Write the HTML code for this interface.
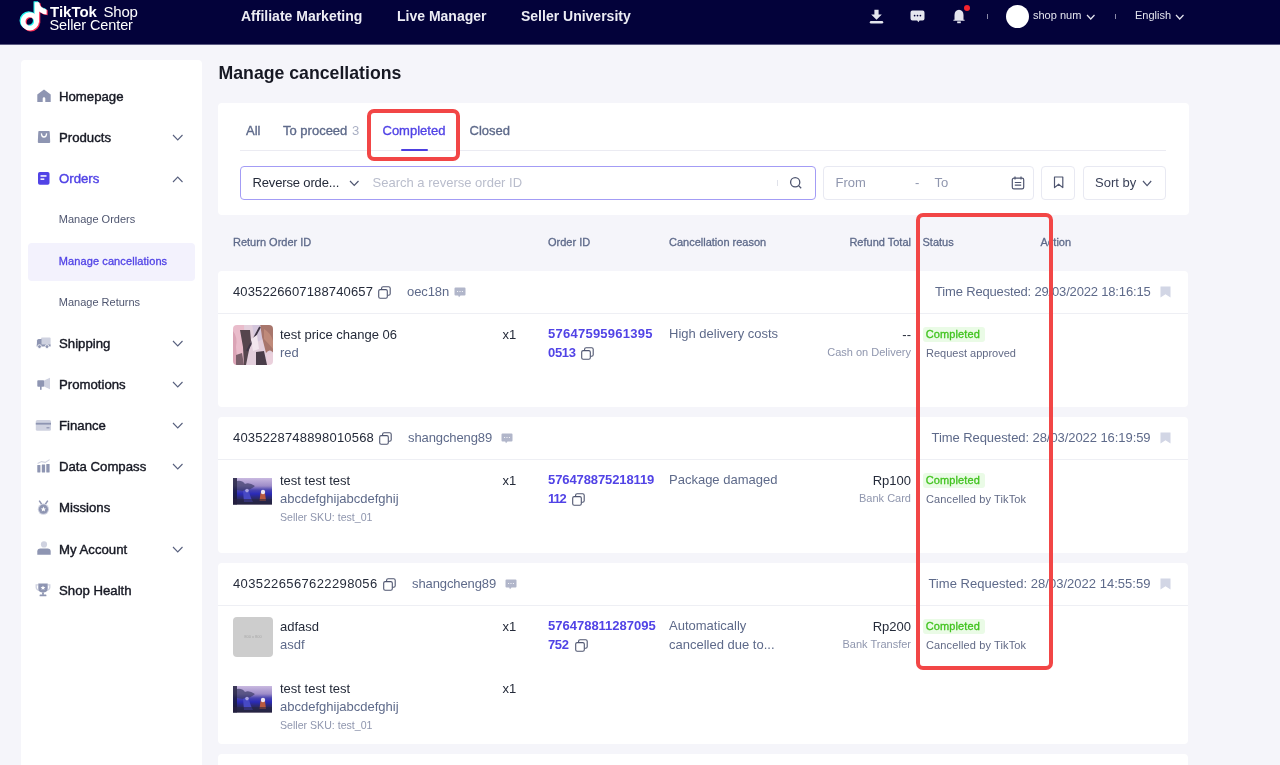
<!DOCTYPE html>
<html><head><meta charset="utf-8">
<style>
*{box-sizing:border-box;margin:0;padding:0}
html,body{width:1280px;height:765px;overflow:hidden}
body{background:#f5f5fa;font-family:"Liberation Sans",sans-serif;color:#252b3a;position:relative}
#root{position:absolute;left:0;top:0;width:1280px;height:765px;will-change:transform}
.a{position:absolute;white-space:nowrap}
.bx{position:absolute;background:#fff;border-radius:4px}
</style></head><body><div id="root">
<div class="a" style="left:0;top:0;width:1280px;height:44px;background:#03023a"></div>
<div class="a" style="left:0;top:44px;width:1280px;height:1px;background:#5c5b82"></div>
<svg class="a" style="left:18px;top:0px" width="32" height="34" viewBox="0 0 32 34"><g transform="translate(-1.1,-0.9)"><rect x="16.6" y="2.4" width="4.6" height="20" fill="#25f4ee"/><circle cx="11.8" cy="21.4" r="6.7" fill="none" stroke="#25f4ee" stroke-width="4.9"/><path d="M16.8 2.4H21.2Q21.8 8.2 28.6 9.4V14.4Q24.2 14.2 21 11.6Z" fill="#25f4ee"/></g><g transform="translate(1.1,0.9)"><rect x="16.6" y="2.4" width="4.6" height="20" fill="#fe2c55"/><circle cx="11.8" cy="21.4" r="6.7" fill="none" stroke="#fe2c55" stroke-width="4.9"/><path d="M16.8 2.4H21.2Q21.8 8.2 28.6 9.4V14.4Q24.2 14.2 21 11.6Z" fill="#fe2c55"/></g><g transform="translate(0,0)"><rect x="16.6" y="2.4" width="4.6" height="20" fill="#fff"/><circle cx="11.8" cy="21.4" r="6.7" fill="none" stroke="#fff" stroke-width="4.9"/><path d="M16.8 2.4H21.2Q21.8 8.2 28.6 9.4V14.4Q24.2 14.2 21 11.6Z" fill="#fff"/></g></svg>
<div class="a" style="left:50px;top:3.70px;font-size:15px;line-height:15px;color:#fff;font-weight:normal;letter-spacing:0px"><b>TikTok</b></div>
<div class="a" style="left:103.5px;top:3.70px;font-size:15px;line-height:15px;color:#fff;font-weight:normal;letter-spacing:-0.2px">Shop</div>
<div class="a" style="left:49.5px;top:18.23px;font-size:14.5px;line-height:14.5px;color:#fff;font-weight:normal;letter-spacing:-0.1px">Seller Center</div>
<div class="a" style="left:241px;top:9.15px;font-size:14px;line-height:14px;color:#ececf4;font-weight:bold;">Affiliate Marketing</div>
<div class="a" style="left:397px;top:9.15px;font-size:14px;line-height:14px;color:#ececf4;font-weight:bold;">Live Manager</div>
<div class="a" style="left:521px;top:9.15px;font-size:14px;line-height:14px;color:#ececf4;font-weight:bold;">Seller University</div>
<svg class="a" style="left:869px;top:9px" width="15" height="15" viewBox="0 0 15 15"><path d="M5.4 0.8H9.6V5.6H12.8L7.5 10.8L2.2 5.6H5.4Z" fill="#e4e5ee"/><rect x="0.8" y="12" width="13.4" height="2.4" rx="1.2" fill="#e4e5ee"/></svg>
<svg class="a" style="left:910px;top:10px" width="15" height="14" viewBox="0 0 15 14"><path d="M2.4 0.5H12.6Q14.5 0.5 14.5 2.4V8.6Q14.5 10.5 12.6 10.5H9.6L8.3 12.3L7.2 10.5H2.4Q0.5 10.5 0.5 8.6V2.4Q0.5 0.5 2.4 0.5Z" fill="#e4e5ee"/><circle cx="4.6" cy="5.6" r="0.85" fill="#03023a"/><circle cx="7.5" cy="5.6" r="0.85" fill="#03023a"/><circle cx="10.4" cy="5.6" r="0.85" fill="#03023a"/></svg>
<svg class="a" style="left:952px;top:9px" width="14" height="15" viewBox="0 0 14 15"><path d="M7 0.7Q11.3 1 11.5 6V10.8H12.6V11.8H1.4V10.8H2.5V6Q2.7 1 7 0.7Z" fill="#e4e5ee"/><rect x="5.2" y="12.4" width="3.6" height="1.8" fill="#e4e5ee"/></svg>
<div class="a" style="left:964px;top:5px;width:6px;height:6px;border-radius:50%;background:#f5222d"></div>
<div class="a" style="left:987px;top:14px;width:1px;height:5px;background:#8a8aa8"></div>
<div class="a" style="left:1006px;top:5px;width:23px;height:23px;border-radius:50%;background:#fff"></div>
<div class="a" style="left:1033px;top:10.19px;font-size:11px;line-height:11px;color:#e4e5ee;font-weight:normal;">shop num</div>
<svg class="a" style="left:1086px;top:14px" width="9.5" height="6" viewBox="0 0 9.5 6"><path d="M1 1L4.75 5L8.5 1" fill="none" stroke="#e4e5ee" stroke-width="1.2"/></svg>
<div class="a" style="left:1115px;top:14px;width:1px;height:5px;background:#8a8aa8"></div>
<div class="a" style="left:1135px;top:9.89px;font-size:11px;line-height:11px;color:#e4e5ee;font-weight:normal;">English</div>
<svg class="a" style="left:1175px;top:14px" width="9.5" height="6" viewBox="0 0 9.5 6"><path d="M1 1L4.75 5L8.5 1" fill="none" stroke="#e4e5ee" stroke-width="1.2"/></svg>
<div class="bx" style="left:21px;top:60px;width:181px;height:720px"></div>
<div class="a" style="left:28px;top:243px;width:167px;height:38px;background:#f3f2fd;border-radius:4px"></div>
<svg class="a" style="left:37px;top:89px" width="14" height="14" viewBox="0 0 14 14"><path d="M0.3 5.4L7 0.6L13.7 5.4V13H8.3V9.6A1.3 1.3 0 0 0 5.7 9.6V13H0.3Z" fill="#8e95b2"/></svg>
<div class="a" style="left:59px;top:90.13px;font-size:13.2px;line-height:13.2px;color:#161823;font-weight:normal;-webkit-text-stroke:0.4px #161823;">Homepage</div>
<svg class="a" style="left:37px;top:130px" width="14" height="14" viewBox="0 0 14 14"><path d="M2.2 1H11.8Q12.6 1 12.7 1.8L13.2 12Q13.2 13 12.2 13H1.8Q0.8 13 0.8 12L1.3 1.8Q1.4 1 2.2 1Z" fill="#8e95b2"/><path d="M4.4 3.4Q4.6 7 7 7Q9.4 7 9.6 3.4" fill="none" stroke="#fff" stroke-width="1.3"/></svg>
<div class="a" style="left:59px;top:131.13px;font-size:13.2px;line-height:13.2px;color:#161823;font-weight:normal;-webkit-text-stroke:0.4px #161823;">Products</div>
<svg class="a" style="left:171.8px;top:133.5px" width="11.5" height="7" viewBox="0 0 11.5 7"><path d="M1 1L5.75 6L10.5 1" fill="none" stroke="#58607e" stroke-width="1.1"/></svg>
<svg class="a" style="left:37px;top:171px" width="14" height="14" viewBox="0 0 14 14"><rect x="1" y="1" width="11.5" height="12.8" rx="1.8" fill="#5143e6"/><rect x="3.5" y="4.2" width="6" height="1.5" fill="#fff"/><rect x="3.5" y="7.4" width="3.8" height="1.5" fill="#fff"/></svg>
<div class="a" style="left:59px;top:172.13px;font-size:13.2px;line-height:13.2px;color:#5143e6;font-weight:normal;-webkit-text-stroke:0.4px #5143e6;">Orders</div>
<svg class="a" style="left:171.8px;top:175.8px" width="11.5" height="7" viewBox="0 0 11.5 7"><path d="M1 6L5.75 1L10.5 6" fill="none" stroke="#58607e" stroke-width="1.1"/></svg>
<svg class="a" style="left:36px;top:337px" width="15" height="12" viewBox="0 0 15 12"><rect x="5" y="0.5" width="9.6" height="8" rx="1" fill="#cfd2e0"/><path d="M1 3.5Q1.2 2 2.6 2H5.5V9.5H0.8Z" fill="#8e95b2"/><rect x="0.8" y="7.5" width="13.8" height="2" fill="#8e95b2"/><circle cx="3.5" cy="9.6" r="1.9" fill="#8e95b2" stroke="#fff" stroke-width="0.8"/><circle cx="11" cy="9.6" r="1.9" fill="#8e95b2" stroke="#fff" stroke-width="0.8"/></svg>
<div class="a" style="left:59px;top:337.13px;font-size:13.2px;line-height:13.2px;color:#161823;font-weight:normal;-webkit-text-stroke:0.4px #161823;">Shipping</div>
<svg class="a" style="left:171.8px;top:339.5px" width="11.5" height="7" viewBox="0 0 11.5 7"><path d="M1 1L5.75 6L10.5 1" fill="none" stroke="#58607e" stroke-width="1.1"/></svg>
<svg class="a" style="left:37px;top:377px" width="14" height="14" viewBox="0 0 14 14"><path d="M7 3.5L13 0.8V12.2L7 9.5Z" fill="#cfd2e0"/><rect x="0.3" y="3.2" width="6.8" height="6.5" rx="0.8" fill="#8e95b2"/><rect x="3" y="9" width="1.6" height="3.8" fill="#8e95b2"/></svg>
<div class="a" style="left:59px;top:378.13px;font-size:13.2px;line-height:13.2px;color:#161823;font-weight:normal;-webkit-text-stroke:0.4px #161823;">Promotions</div>
<svg class="a" style="left:171.8px;top:380.5px" width="11.5" height="7" viewBox="0 0 11.5 7"><path d="M1 1L5.75 6L10.5 1" fill="none" stroke="#58607e" stroke-width="1.1"/></svg>
<svg class="a" style="left:35px;top:419px" width="17" height="13" viewBox="0 0 17 13"><rect x="0.8" y="1" width="15.2" height="10.8" rx="1.5" fill="#cfd2e0"/><rect x="0.8" y="3.8" width="15.2" height="1.8" fill="#8e95b2"/><rect x="11.5" y="8.2" width="3" height="1.2" fill="#8e95b2"/></svg>
<div class="a" style="left:59px;top:419.13px;font-size:13.2px;line-height:13.2px;color:#161823;font-weight:normal;-webkit-text-stroke:0.4px #161823;">Finance</div>
<svg class="a" style="left:171.8px;top:421.5px" width="11.5" height="7" viewBox="0 0 11.5 7"><path d="M1 1L5.75 6L10.5 1" fill="none" stroke="#58607e" stroke-width="1.1"/></svg>
<svg class="a" style="left:37px;top:459px" width="14" height="14" viewBox="0 0 14 14"><path d="M0.6 4.6L4.5 2.6L8.2 3.4L12.6 0.6" fill="none" stroke="#cfd2e0" stroke-width="1.1"/><rect x="0.3" y="6" width="3.1" height="7.4" rx="0.3" fill="#8e95b2"/><rect x="4.8" y="5.6" width="3.3" height="7.8" rx="0.3" fill="#8e95b2"/><rect x="9.3" y="5" width="3.3" height="8.4" rx="0.3" fill="#8e95b2"/></svg>
<div class="a" style="left:59px;top:460.13px;font-size:13.2px;line-height:13.2px;color:#161823;font-weight:normal;-webkit-text-stroke:0.4px #161823;">Data Compass</div>
<svg class="a" style="left:171.8px;top:462.5px" width="11.5" height="7" viewBox="0 0 11.5 7"><path d="M1 1L5.75 6L10.5 1" fill="none" stroke="#58607e" stroke-width="1.1"/></svg>
<svg class="a" style="left:37px;top:500px" width="13" height="15" viewBox="0 0 13 15"><path d="M2.2 0.6L4.6 4.2M10.8 0.6L8.4 4.2" stroke="#8e95b2" stroke-width="1.5"/><circle cx="6.4" cy="9.2" r="5.6" fill="#cfd2e0"/><circle cx="6.4" cy="9.2" r="4.6" fill="#8e95b2"/><path d="M6.4 6.6L7.2 8.4L9 8.5L7.6 9.7L8.1 11.5L6.4 10.5L4.7 11.5L5.2 9.7L3.8 8.5L5.6 8.4Z" fill="#fff"/></svg>
<div class="a" style="left:59px;top:501.13px;font-size:13.2px;line-height:13.2px;color:#161823;font-weight:normal;-webkit-text-stroke:0.4px #161823;">Missions</div>
<svg class="a" style="left:37px;top:541px" width="14" height="14" viewBox="0 0 14 14"><circle cx="7" cy="3.4" r="3.1" fill="#cfd2e0"/><path d="M0.3 13.8V10.6Q0.3 7.6 3.4 7.6H10.6Q13.7 7.6 13.7 10.6V13.8Z" fill="#8e95b2"/></svg>
<div class="a" style="left:59px;top:543.13px;font-size:13.2px;line-height:13.2px;color:#161823;font-weight:normal;-webkit-text-stroke:0.4px #161823;">My Account</div>
<svg class="a" style="left:171.8px;top:545.5px" width="11.5" height="7" viewBox="0 0 11.5 7"><path d="M1 1L5.75 6L10.5 1" fill="none" stroke="#58607e" stroke-width="1.1"/></svg>
<svg class="a" style="left:35px;top:583px" width="16" height="14" viewBox="0 0 16 14"><path d="M3.3 1.8H1.2V4.5Q1.5 7 4 7.3M12.7 1.8H14.8V4.5Q14.5 7 12 7.3" fill="none" stroke="#cfd2e0" stroke-width="1.3"/><path d="M3.3 0.6H12.7V5.3Q12.7 9.6 8 9.6Q3.3 9.6 3.3 5.3Z" fill="#8e95b2"/><rect x="7.1" y="9.4" width="1.8" height="2.4" fill="#8e95b2"/><rect x="4.6" y="11.5" width="6.8" height="1.8" rx="0.4" fill="#8e95b2"/><path d="M8 2.4L8.7 4L10.4 4.1L9.1 5.2L9.5 6.8L8 5.9L6.5 6.8L6.9 5.2L5.6 4.1L7.3 4Z" fill="#fff"/></svg>
<div class="a" style="left:59px;top:584.13px;font-size:13.2px;line-height:13.2px;color:#161823;font-weight:normal;-webkit-text-stroke:0.4px #161823;">Shop Health</div>
<div class="a" style="left:58.8px;top:214.49px;font-size:11px;line-height:11px;color:#4f5670;font-weight:normal;">Manage Orders</div>
<div class="a" style="left:58.8px;top:256.49px;font-size:11px;line-height:11px;color:#5143e6;font-weight:normal;-webkit-text-stroke:0.3px #5143e6;letter-spacing:0.1px">Manage cancellations</div>
<div class="a" style="left:58.8px;top:297.49px;font-size:11px;line-height:11px;color:#4f5670;font-weight:normal;">Manage Returns</div>
<div class="a" style="left:218.5px;top:65.22px;font-size:17.7px;line-height:17.7px;color:#161823;font-weight:bold;">Manage cancellations</div>
<div class="bx" style="left:218px;top:103px;width:971px;height:112px"></div>
<div class="a" style="left:240px;top:150px;width:926px;height:1px;background:#ebebf2"></div>
<div class="a" style="left:246px;top:123.80px;font-size:13px;line-height:13px;color:#5e6a8a;font-weight:normal;-webkit-text-stroke:0.35px #5e6a8a;">All</div>
<div class="a" style="left:283px;top:123.80px;font-size:13px;line-height:13px;color:#5e6a8a;font-weight:normal;-webkit-text-stroke:0.35px #5e6a8a;">To proceed</div>
<div class="a" style="left:352px;top:123.80px;font-size:13px;line-height:13px;color:#aab0c4;font-weight:normal;">3</div>
<div class="a" style="left:382.5px;top:123.80px;font-size:13px;line-height:13px;color:#5143e6;font-weight:normal;-webkit-text-stroke:0.35px #5143e6;">Completed</div>
<div class="a" style="left:401px;top:149px;width:27px;height:2px;background:#4d3fe0;border-radius:1px"></div>
<div class="a" style="left:469.5px;top:123.80px;font-size:13px;line-height:13px;color:#5e6a8a;font-weight:normal;-webkit-text-stroke:0.35px #5e6a8a;">Closed</div>
<div class="a" style="left:240px;top:166px;width:576px;height:34px;border:1px solid #a39cf5;border-radius:4px;background:#fff"></div>
<div class="a" style="left:252.5px;top:176.10px;font-size:13px;line-height:13px;color:#252b3a;font-weight:normal;letter-spacing:-0.15px">Reverse orde...</div>
<svg class="a" style="left:348.5px;top:180px" width="10.5" height="6.5" viewBox="0 0 10.5 6.5"><path d="M1 1L5.25 5.5L9.5 1" fill="none" stroke="#4f5670" stroke-width="1.2"/></svg>
<div class="a" style="left:372.5px;top:176.10px;font-size:13px;line-height:13px;color:#b9bdcc;font-weight:normal;">Search a reverse order ID</div>
<div class="a" style="left:777px;top:180px;width:1px;height:6px;background:#e0e2ea"></div>
<svg class="a" style="left:789px;top:176px" width="14" height="14" viewBox="0 0 14 14"><circle cx="6.2" cy="6.2" r="4.6" fill="none" stroke="#4f5670" stroke-width="1.3"/><path d="M9.6 9.6L12.2 12.2" stroke="#4f5670" stroke-width="1.3"/></svg>
<div class="a" style="left:823px;top:166px;width:211px;height:34px;border:1px solid #e8e9f2;border-radius:4px;background:#fff"></div>
<div class="a" style="left:835.6px;top:176.10px;font-size:13px;line-height:13px;color:#8f96ae;font-weight:normal;">From</div>
<div class="a" style="left:915px;top:176.10px;font-size:13px;line-height:13px;color:#8f96ae;font-weight:normal;">-</div>
<div class="a" style="left:934.5px;top:176.10px;font-size:13px;line-height:13px;color:#8f96ae;font-weight:normal;">To</div>
<svg class="a" style="left:1011px;top:176px" width="14" height="14" viewBox="0 0 14 14"><rect x="1.3" y="2.2" width="11.4" height="10.6" rx="1.6" fill="none" stroke="#4f5670" stroke-width="1.2"/><path d="M4 0.6V3.6M10 0.6V3.6M3.8 6.5H10.2M3.8 9.2H10.2" stroke="#4f5670" stroke-width="1.2"/></svg>
<div class="a" style="left:1041px;top:166px;width:34px;height:34px;border:1px solid #e8e9f2;border-radius:4px;background:#fff"></div>
<svg class="a" style="left:1053px;top:176px" width="12" height="13" viewBox="0 0 12 13"><path d="M1.5 1H9.8V11.6L5.65 8.2L1.5 11.6Z" fill="none" stroke="#4f5670" stroke-width="1.2" stroke-linejoin="round"/></svg>
<div class="a" style="left:1083px;top:166px;width:83px;height:34px;border:1px solid #e8e9f2;border-radius:4px;background:#fff"></div>
<div class="a" style="left:1095px;top:176.10px;font-size:13px;line-height:13px;color:#252b3a;font-weight:normal;color:#3a4158">Sort by</div>
<svg class="a" style="left:1142.3px;top:180px" width="10.2" height="6.6" viewBox="0 0 10.2 6.6"><path d="M1 1L5.1 5.6L9.2 1" fill="none" stroke="#4f5670" stroke-width="1.2"/></svg>
<div class="a" style="left:233px;top:237.09px;font-size:11px;line-height:11px;color:#5e6a8a;font-weight:normal;-webkit-text-stroke:0.3px #5e6a8a;">Return Order ID</div>
<div class="a" style="left:548px;top:237.09px;font-size:11px;line-height:11px;color:#5e6a8a;font-weight:normal;-webkit-text-stroke:0.3px #5e6a8a;">Order ID</div>
<div class="a" style="left:669px;top:237.09px;font-size:11px;line-height:11px;color:#5e6a8a;font-weight:normal;-webkit-text-stroke:0.3px #5e6a8a;">Cancellation reason</div>
<div class="a" style="left:922.5px;top:237.09px;font-size:11px;line-height:11px;color:#5e6a8a;font-weight:normal;-webkit-text-stroke:0.3px #5e6a8a;">Status</div>
<div class="a" style="left:1040.5px;top:237.09px;font-size:11px;line-height:11px;color:#5e6a8a;font-weight:normal;-webkit-text-stroke:0.3px #5e6a8a;">Action</div>
<div class="a" style="right:369px;top:237.09px;font-size:11px;line-height:11px;color:#5e6a8a;font-weight:normal;-webkit-text-stroke:0.3px #5e6a8a;text-align:right;">Refund Total</div>
<div class="bx" style="left:218px;top:271px;width:970px;height:136px"></div>
<div class="a" style="left:218px;top:313px;width:970px;height:1px;background:#eeeff4"></div>
<div class="a" style="left:233px;top:284.60px;font-size:13px;line-height:13px;color:#252b3a;font-weight:normal;letter-spacing:0.14px">4035226607188740657</div>
<svg class="a" style="left:378px;top:286px" width="13" height="13" viewBox="0 0 13 13"><rect x="0.7" y="3.6" width="8.6" height="8.6" rx="1.5" fill="#fff" stroke="#4f5670" stroke-width="1.1"/><path d="M3.6 3.4V2.2Q3.6 0.7 5.1 0.7H10.6Q12.2 0.7 12.2 2.2V7.8Q12.2 9.3 10.6 9.3H9.6" fill="none" stroke="#4f5670" stroke-width="1.1"/></svg>
<div class="a" style="left:407px;top:284.60px;font-size:13px;line-height:13px;color:#5e6a8a;font-weight:normal;letter-spacing:-0.1px">oec18n</div>
<svg class="a" style="left:454px;top:287px" width="12" height="11" viewBox="0 0 12 11"><path d="M1.5 0.5H10.5Q11.5 0.5 11.5 1.5V7.5Q11.5 8.5 10.5 8.5H6.5L5 10.2L4.2 8.5H1.5Q0.5 8.5 0.5 7.5V1.5Q0.5 0.5 1.5 0.5Z" fill="#b1b6ca"/><circle cx="3.6" cy="4.5" r="0.6" fill="#fff"/><circle cx="6" cy="4.5" r="0.6" fill="#fff"/><circle cx="8.4" cy="4.5" r="0.6" fill="#fff"/></svg>
<div class="a" style="right:129.5px;top:285.20px;font-size:13px;line-height:13px;color:#5e6a8a;font-weight:normal;text-align:right;letter-spacing:-0.17px">Time Requested: 29/03/2022 18:16:15</div>
<svg class="a" style="left:1160px;top:286px" width="11" height="12" viewBox="0 0 11 12"><path d="M0.5 0.5H10.5V11.5L5.5 8.3L0.5 11.5Z" fill="#d2d6e5"/></svg>
<svg class="a" style="left:233px;top:325px" width="40" height="40" viewBox="0 0 40 40"><defs><clipPath id="cpa"><rect x="0" y="0" width="40" height="40" rx="4"/></clipPath><filter id="bla" x="-10%" y="-10%" width="120%" height="120%"><feGaussianBlur stdDeviation="0.7"/></filter></defs><g clip-path="url(#cpa)"><g filter="url(#bla)"><rect x="-2" y="-2" width="44" height="44" fill="#e3cfdc"/><path d="M-2 -2H11L12 42H-2Z" fill="#e9bccb"/><path d="M0 6Q5 12 3 22L5 42H-2Z" fill="#dba4b6"/><path d="M19 -2H28L30 14L22 18Z" fill="#d4c6dc"/><path d="M27 -2H42V30Q37 22 33 28L29 12Z" fill="#a8766c"/><path d="M31 4Q38 8 40 16V24Q35 18 31 14Z" fill="#bf8a7a"/><path d="M7 5L17 5L18 16L15 30L13 40H11L10 22Z" fill="#54444e"/><path d="M27 2L14 26" stroke="#3e3444" stroke-width="1.8"/><path d="M3 30L9 28L11 40H3Z" fill="#7a5e6a"/><path d="M23 27L31 26L34 40H23Z" fill="#4a3d4a"/><path d="M18 14L24 10L26 24L20 26Z" fill="#f2e6ee"/><path d="M34 30L40 28V40H34Z" fill="#ead0dc"/></g></g></svg>
<div class="a" style="left:280px;top:328.00px;font-size:13px;line-height:13px;color:#252b3a;font-weight:normal;">test price change 06</div>
<div class="a" style="left:280px;top:346.00px;font-size:13px;line-height:13px;color:#5e6a8a;font-weight:normal;">red</div>
<div class="a" style="left:502.5px;top:328.00px;font-size:13px;line-height:13px;color:#252b3a;font-weight:normal;">x1</div>
<div class="a" style="left:548px;top:327.40px;font-size:13px;line-height:13px;color:#5143e6;font-weight:bold;letter-spacing:0.25px">57647595961395</div>
<div class="a" style="left:548px;top:345.60px;font-size:13px;line-height:13px;color:#5143e6;font-weight:bold;letter-spacing:-0.3px">0513</div>
<svg class="a" style="left:581px;top:347px" width="13" height="13" viewBox="0 0 13 13"><rect x="0.7" y="3.6" width="8.6" height="8.6" rx="1.5" fill="#fff" stroke="#4f5670" stroke-width="1.1"/><path d="M3.6 3.4V2.2Q3.6 0.7 5.1 0.7H10.6Q12.2 0.7 12.2 2.2V7.8Q12.2 9.3 10.6 9.3H9.6" fill="none" stroke="#4f5670" stroke-width="1.1"/></svg>
<div class="a" style="left:669px;top:327.30px;font-size:13px;line-height:13px;color:#5e6a8a;font-weight:normal;">High delivery costs</div>
<div class="a" style="right:369px;top:327.80px;font-size:13px;line-height:13px;color:#252b3a;font-weight:normal;text-align:right;">--</div>
<div class="a" style="right:369px;top:347.19px;font-size:11px;line-height:11px;color:#8f96ae;font-weight:normal;text-align:right;">Cash on Delivery</div>
<div class="a" style="left:923px;top:326.5px;width:61.5px;height:15px;background:#eafbe6;border-radius:3px"></div>
<div class="a" style="left:925.8px;top:328.69px;font-size:11px;line-height:11px;color:#41c31f;font-weight:normal;-webkit-text-stroke:0.3px #41c31f;letter-spacing:0.1px">Completed</div>
<div class="a" style="left:926px;top:347.69px;font-size:11px;line-height:11px;color:#626a86;font-weight:normal;">Request approved</div>
<div class="bx" style="left:218px;top:417px;width:970px;height:136px"></div>
<div class="a" style="left:218px;top:459px;width:970px;height:1px;background:#eeeff4"></div>
<div class="a" style="left:233px;top:430.60px;font-size:13px;line-height:13px;color:#252b3a;font-weight:normal;letter-spacing:0.19px">4035228748898010568</div>
<svg class="a" style="left:379px;top:432px" width="13" height="13" viewBox="0 0 13 13"><rect x="0.7" y="3.6" width="8.6" height="8.6" rx="1.5" fill="#fff" stroke="#4f5670" stroke-width="1.1"/><path d="M3.6 3.4V2.2Q3.6 0.7 5.1 0.7H10.6Q12.2 0.7 12.2 2.2V7.8Q12.2 9.3 10.6 9.3H9.6" fill="none" stroke="#4f5670" stroke-width="1.1"/></svg>
<div class="a" style="left:408px;top:430.60px;font-size:13px;line-height:13px;color:#5e6a8a;font-weight:normal;letter-spacing:-0.1px">shangcheng89</div>
<svg class="a" style="left:501px;top:433px" width="12" height="11" viewBox="0 0 12 11"><path d="M1.5 0.5H10.5Q11.5 0.5 11.5 1.5V7.5Q11.5 8.5 10.5 8.5H6.5L5 10.2L4.2 8.5H1.5Q0.5 8.5 0.5 7.5V1.5Q0.5 0.5 1.5 0.5Z" fill="#b1b6ca"/><circle cx="3.6" cy="4.5" r="0.6" fill="#fff"/><circle cx="6" cy="4.5" r="0.6" fill="#fff"/><circle cx="8.4" cy="4.5" r="0.6" fill="#fff"/></svg>
<div class="a" style="right:129.5px;top:431.20px;font-size:13px;line-height:13px;color:#5e6a8a;font-weight:normal;text-align:right;letter-spacing:-0.07px">Time Requested: 28/03/2022 16:19:59</div>
<svg class="a" style="left:1160px;top:432px" width="11" height="12" viewBox="0 0 11 12"><path d="M0.5 0.5H10.5V11.5L5.5 8.3L0.5 11.5Z" fill="#d2d6e5"/></svg>
<svg class="a" style="left:233px;top:477.5px" width="39" height="27" viewBox="0 0 39 27"><defs><linearGradient id="lg1" x1="0" y1="0" x2="0" y2="1"><stop offset="0" stop-color="#c9b9e0"/><stop offset="0.3" stop-color="#9d8cc8"/><stop offset="0.45" stop-color="#4a45b0"/><stop offset="0.6" stop-color="#2a2ab8"/><stop offset="0.75" stop-color="#2c2a70"/><stop offset="1" stop-color="#221f40"/></linearGradient><filter id="blb" x="-20%" y="-20%" width="140%" height="140%"><feGaussianBlur stdDeviation="0.7"/></filter></defs><rect x="0" y="0" width="39" height="26.5" fill="url(#lg1)"/><g filter="url(#blb)"><rect x="0" y="0" width="4" height="26.5" fill="#1a1a3a" opacity="0.8"/><path d="M4 3Q9 2 12 6Q16 4 22 8Q18 12 10 13L4 12Z" fill="#3c3a6a" opacity="0.7"/><path d="M10 13Q14 10 16 14L18 20L20 24H11Z" fill="#4648c4"/><circle cx="14" cy="12.6" r="1.8" fill="#a9a3e0"/><path d="M27.5 15Q30 13 32 15L33 23H26.5Z" fill="#b85a40"/><circle cx="30" cy="14" r="2.2" fill="#eee6f2"/><rect x="0" y="21" width="39" height="5.5" fill="#2a2540" opacity="0.6"/></g></svg>
<div class="a" style="left:280px;top:474.00px;font-size:13px;line-height:13px;color:#252b3a;font-weight:normal;">test test test</div>
<div class="a" style="left:280px;top:492.00px;font-size:13px;line-height:13px;color:#5e6a8a;font-weight:normal;">abcdefghijabcdefghij</div>
<div class="a" style="left:280px;top:511.53px;font-size:10.6px;line-height:10.6px;color:#8f96ae;font-weight:normal;">Seller SKU: test_01</div>
<div class="a" style="left:502.5px;top:474.00px;font-size:13px;line-height:13px;color:#252b3a;font-weight:normal;">x1</div>
<div class="a" style="left:548px;top:473.40px;font-size:13px;line-height:13px;color:#5143e6;font-weight:bold;letter-spacing:-0.1px">576478875218119</div>
<div class="a" style="left:548px;top:491.60px;font-size:13px;line-height:13px;color:#5143e6;font-weight:bold;letter-spacing:-1.1px">112</div>
<svg class="a" style="left:571.5px;top:493px" width="13" height="13" viewBox="0 0 13 13"><rect x="0.7" y="3.6" width="8.6" height="8.6" rx="1.5" fill="#fff" stroke="#4f5670" stroke-width="1.1"/><path d="M3.6 3.4V2.2Q3.6 0.7 5.1 0.7H10.6Q12.2 0.7 12.2 2.2V7.8Q12.2 9.3 10.6 9.3H9.6" fill="none" stroke="#4f5670" stroke-width="1.1"/></svg>
<div class="a" style="left:669px;top:473.30px;font-size:13px;line-height:13px;color:#5e6a8a;font-weight:normal;">Package damaged</div>
<div class="a" style="right:369px;top:473.80px;font-size:13px;line-height:13px;color:#252b3a;font-weight:normal;text-align:right;">Rp100</div>
<div class="a" style="right:369px;top:493.19px;font-size:11px;line-height:11px;color:#8f96ae;font-weight:normal;text-align:right;">Bank Card</div>
<div class="a" style="left:923px;top:472.5px;width:61.5px;height:15px;background:#eafbe6;border-radius:3px"></div>
<div class="a" style="left:925.8px;top:474.69px;font-size:11px;line-height:11px;color:#41c31f;font-weight:normal;-webkit-text-stroke:0.3px #41c31f;letter-spacing:0.1px">Completed</div>
<div class="a" style="left:926px;top:493.69px;font-size:11px;line-height:11px;color:#626a86;font-weight:normal;letter-spacing:0.12px">Cancelled by TikTok</div>
<div class="bx" style="left:218px;top:563px;width:970px;height:181px"></div>
<div class="a" style="left:218px;top:605px;width:970px;height:1px;background:#eeeff4"></div>
<div class="a" style="left:233px;top:576.60px;font-size:13px;line-height:13px;color:#252b3a;font-weight:normal;letter-spacing:0.38px">4035226567622298056</div>
<svg class="a" style="left:383px;top:578px" width="13" height="13" viewBox="0 0 13 13"><rect x="0.7" y="3.6" width="8.6" height="8.6" rx="1.5" fill="#fff" stroke="#4f5670" stroke-width="1.1"/><path d="M3.6 3.4V2.2Q3.6 0.7 5.1 0.7H10.6Q12.2 0.7 12.2 2.2V7.8Q12.2 9.3 10.6 9.3H9.6" fill="none" stroke="#4f5670" stroke-width="1.1"/></svg>
<div class="a" style="left:412px;top:576.60px;font-size:13px;line-height:13px;color:#5e6a8a;font-weight:normal;letter-spacing:-0.1px">shangcheng89</div>
<svg class="a" style="left:505px;top:579px" width="12" height="11" viewBox="0 0 12 11"><path d="M1.5 0.5H10.5Q11.5 0.5 11.5 1.5V7.5Q11.5 8.5 10.5 8.5H6.5L5 10.2L4.2 8.5H1.5Q0.5 8.5 0.5 7.5V1.5Q0.5 0.5 1.5 0.5Z" fill="#b1b6ca"/><circle cx="3.6" cy="4.5" r="0.6" fill="#fff"/><circle cx="6" cy="4.5" r="0.6" fill="#fff"/><circle cx="8.4" cy="4.5" r="0.6" fill="#fff"/></svg>
<div class="a" style="right:129.5px;top:577.20px;font-size:13px;line-height:13px;color:#5e6a8a;font-weight:normal;text-align:right;letter-spacing:0.02px">Time Requested: 28/03/2022 14:55:59</div>
<svg class="a" style="left:1160px;top:578px" width="11" height="12" viewBox="0 0 11 12"><path d="M0.5 0.5H10.5V11.5L5.5 8.3L0.5 11.5Z" fill="#d2d6e5"/></svg>
<div class="a" style="left:233px;top:617px;width:40px;height:40px;border-radius:4px;background:#cdcdcd"><div class="a" style="left:0;top:17px;width:40px;text-align:center;font-size:4px;color:#a8a8a8">800 x 800</div></div>
<div class="a" style="left:280px;top:620.00px;font-size:13px;line-height:13px;color:#252b3a;font-weight:normal;">adfasd</div>
<div class="a" style="left:280px;top:638.00px;font-size:13px;line-height:13px;color:#5e6a8a;font-weight:normal;">asdf</div>
<div class="a" style="left:502.5px;top:620.00px;font-size:13px;line-height:13px;color:#252b3a;font-weight:normal;">x1</div>
<svg class="a" style="left:233px;top:685.5px" width="39" height="27" viewBox="0 0 39 27"><defs><linearGradient id="lg1" x1="0" y1="0" x2="0" y2="1"><stop offset="0" stop-color="#c9b9e0"/><stop offset="0.3" stop-color="#9d8cc8"/><stop offset="0.45" stop-color="#4a45b0"/><stop offset="0.6" stop-color="#2a2ab8"/><stop offset="0.75" stop-color="#2c2a70"/><stop offset="1" stop-color="#221f40"/></linearGradient><filter id="blb" x="-20%" y="-20%" width="140%" height="140%"><feGaussianBlur stdDeviation="0.7"/></filter></defs><rect x="0" y="0" width="39" height="26.5" fill="url(#lg1)"/><g filter="url(#blb)"><rect x="0" y="0" width="4" height="26.5" fill="#1a1a3a" opacity="0.8"/><path d="M4 3Q9 2 12 6Q16 4 22 8Q18 12 10 13L4 12Z" fill="#3c3a6a" opacity="0.7"/><path d="M10 13Q14 10 16 14L18 20L20 24H11Z" fill="#4648c4"/><circle cx="14" cy="12.6" r="1.8" fill="#a9a3e0"/><path d="M27.5 15Q30 13 32 15L33 23H26.5Z" fill="#b85a40"/><circle cx="30" cy="14" r="2.2" fill="#eee6f2"/><rect x="0" y="21" width="39" height="5.5" fill="#2a2540" opacity="0.6"/></g></svg>
<div class="a" style="left:280px;top:682.00px;font-size:13px;line-height:13px;color:#252b3a;font-weight:normal;">test test test</div>
<div class="a" style="left:280px;top:700.00px;font-size:13px;line-height:13px;color:#5e6a8a;font-weight:normal;">abcdefghijabcdefghij</div>
<div class="a" style="left:280px;top:719.53px;font-size:10.6px;line-height:10.6px;color:#8f96ae;font-weight:normal;">Seller SKU: test_01</div>
<div class="a" style="left:502.5px;top:682.00px;font-size:13px;line-height:13px;color:#252b3a;font-weight:normal;">x1</div>
<div class="a" style="left:548px;top:619.40px;font-size:13px;line-height:13px;color:#5143e6;font-weight:bold;letter-spacing:0px">576478811287095</div>
<div class="a" style="left:548px;top:637.60px;font-size:13px;line-height:13px;color:#5143e6;font-weight:bold;letter-spacing:-0.4px">752</div>
<svg class="a" style="left:574.5px;top:639px" width="13" height="13" viewBox="0 0 13 13"><rect x="0.7" y="3.6" width="8.6" height="8.6" rx="1.5" fill="#fff" stroke="#4f5670" stroke-width="1.1"/><path d="M3.6 3.4V2.2Q3.6 0.7 5.1 0.7H10.6Q12.2 0.7 12.2 2.2V7.8Q12.2 9.3 10.6 9.3H9.6" fill="none" stroke="#4f5670" stroke-width="1.1"/></svg>
<div class="a" style="left:669px;top:619.30px;font-size:13px;line-height:13px;color:#5e6a8a;font-weight:normal;">Automatically</div>
<div class="a" style="left:669px;top:637.50px;font-size:13px;line-height:13px;color:#5e6a8a;font-weight:normal;">cancelled due to...</div>
<div class="a" style="right:369px;top:619.80px;font-size:13px;line-height:13px;color:#252b3a;font-weight:normal;text-align:right;">Rp200</div>
<div class="a" style="right:369px;top:639.19px;font-size:11px;line-height:11px;color:#8f96ae;font-weight:normal;text-align:right;">Bank Transfer</div>
<div class="a" style="left:923px;top:618.5px;width:61.5px;height:15px;background:#eafbe6;border-radius:3px"></div>
<div class="a" style="left:925.8px;top:620.69px;font-size:11px;line-height:11px;color:#41c31f;font-weight:normal;-webkit-text-stroke:0.3px #41c31f;letter-spacing:0.1px">Completed</div>
<div class="a" style="left:926px;top:639.69px;font-size:11px;line-height:11px;color:#626a86;font-weight:normal;letter-spacing:0.12px">Cancelled by TikTok</div>
<div class="bx" style="left:218px;top:754px;width:970px;height:40px"></div>
<div class="a" style="left:366.5px;top:109.3px;width:93px;height:51.5px;border:4px solid #f24646;border-radius:7px"></div>
<div class="a" style="left:916px;top:213px;width:137px;height:457px;border:4px solid #f24646;border-radius:7px"></div>
</div></body></html>
